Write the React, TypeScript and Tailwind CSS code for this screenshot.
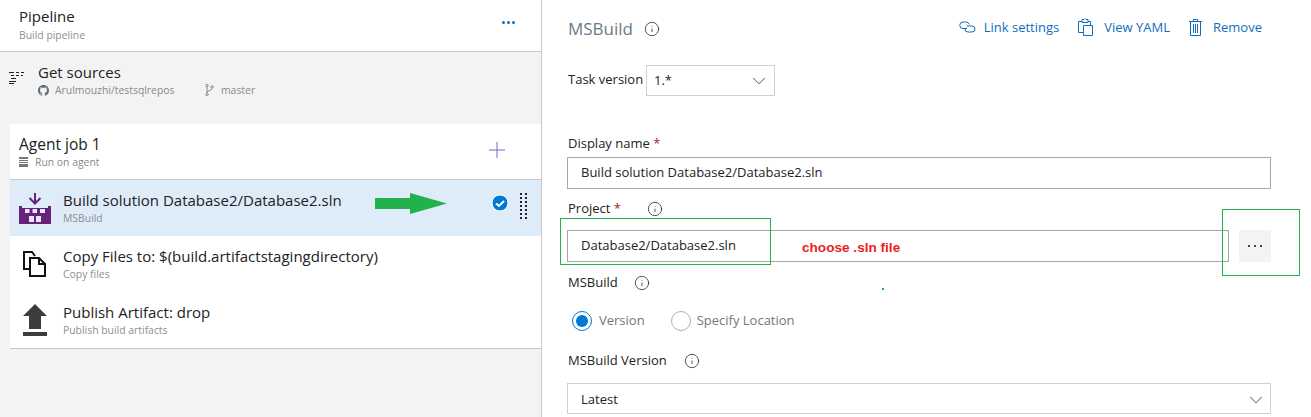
import { ChevronDown, Info } from 'lucide-react';

function BuildIcon() {
    return (
        <svg width="32" height="32" viewBox="0 0 32 32" className="shrink-0">
            <path d="M0 14h3v2h26v-2h3v18H0z M6 17v4h4.500v-4z M13.500 17v4h4.500v-4z M21 17v4h5v-4z M10 24v6h5v-6z M17 24v6h5v-6z" fill="#68217a" fillRule="evenodd" />
            <path d="M16 1v10 M10.500 6l5.500 5.500L21.500 6" fill="none" stroke="#68217a" strokeWidth="2" />
        </svg>
    );
}

function CopyIcon() {
    return (
        <svg width="24" height="26" viewBox="0 0 24 26" className="shrink-0">
            <path d="M8 18H1V1h8l3 4" fill="none" stroke="#111" strokeWidth="2" />
            <path d="M7 7h9l6 6v12H7z M16 7v6h6" fill="#fff" stroke="#111" strokeWidth="2" />
        </svg>
    );
}

function UploadIcon() {
    return (
        <svg width="24" height="32" viewBox="0 0 24 32" className="shrink-0">
            <path d="M12 0l12 12h-6v13H6V12H0z" fill="#3c3c3c" />
            <path d="M0 28h24v4H0z" fill="#3c3c3c" />
        </svg>
    );
}

function SourcesIcon() {
    return (
        <svg width="15" height="12" viewBox="0 0 15 12">
            <path d="M0 .5h5M7 .5h3M12 .5h3M2 3.500h3M7 3.500h3M12 3.500h2M2 6.500h5M0 9.500h7M0 11.500h5" stroke="#222" strokeWidth="1" fill="none" />
        </svg>
    );
}

function GithubIcon() {
    return (
        <svg width="11" height="11" viewBox="0 0 16 16" fill="#5f6b73" className="shrink-0">
            <path d="M8 0C3.580 0 0 3.580 0 8c0 3.540 2.290 6.530 5.470 7.590.4.070.55-.17.55-.38v-1.340c-2.230.48-2.700-1.070-2.700-1.070-.36-.92-.89-1.170-.89-1.170-.73-.5.050-.49.050-.49.800.060 1.230.830 1.230.830.720 1.220 1.870.870 2.330.660.070-.52.280-.870.500-1.070-1.780-.2-3.640-.89-3.640-3.950 0-.870.310-1.590.820-2.150-.080-.2-.360-1.020.080-2.120 0 0 .670-.210 2.200.820a7.600 7.600 0 014 0c1.530-1.040 2.200-.820 2.200-.820.440 1.100.160 1.920.080 2.120.510.560.820 1.270.820 2.150 0 3.070-1.870 3.750-3.650 3.950.290.250.540.730.540 1.480v2.200c0 .210.150.460.550.380A8 8 0 0016 8c0-4.420-3.580-8-8-8z" />
        </svg>
    );
}

function BranchIcon() {
    return (
        <svg width="9" height="12" viewBox="0 0 9 12" fill="none" stroke="#8a8a8a" strokeWidth="1" className="shrink-0">
            <circle cx="2" cy="1.500" r="1.200" />
            <circle cx="2" cy="10.500" r="1.200" />
            <circle cx="7" cy="3" r="1.200" />
            <path d="M2 3v6M7 4.500C7 7 2 6 2 8.500" />
        </svg>
    );
}

function AgentIcon() {
    return (
        <svg width="9" height="10" viewBox="0 0 9 10" className="shrink-0">
            <path d="M0 0h9v2H0zM0 3h9v1H0zM0 5h9v1H0zM0 7h9v3H0z" fill="#777" />
        </svg>
    );
}

function LinkIcon() {
    return (
        <svg width="17" height="12" viewBox="0 0 17 12" fill="none" stroke="#106ebe" strokeWidth="1" className="shrink-0">
            <path d="M8 7.500H4a3.250 3.250 0 0 1 0-6.500h3a3.250 3.250 0 0 1 3.200 2.500" />
            <path d="M8 5h5a3 3 0 0 1 0 6H9a3 3 0 0 1-3-3" />
        </svg>
    );
}

function ClipboardIcon() {
    return (
        <svg width="15" height="18" viewBox="0 0 15 18" fill="none" stroke="#106ebe" strokeWidth="1" className="shrink-0">
            <path d="M4 3.500H.5v11H5 M4 1.500h2l1-1 1 1h2v3H4z M10 3.500h2.500V7" />
            <path d="M5.500 7.500h9v10h-9z" />
        </svg>
    );
}

function TrashIcon() {
    return (
        <svg width="13" height="17" viewBox="0 0 13 17" fill="none" stroke="#106ebe" strokeWidth="1" className="shrink-0">
            <path d="M0 2.500h13 M4.500 2.500v-2h4v2 M1.500 2.500v14h10v-14 M4.500 5v9 M6.500 5v9 M8.500 5v9" />
        </svg>
    );
}

function FieldInfo() {
    return <Info size={16} strokeWidth={1.25} className="text-[#333] shrink-0" />;
}

const steps = [
    { title: 'Build solution Database2/Database2.sln', sub: 'MSBuild', icon: <BuildIcon />, selected: true },
    { title: 'Copy Files to: $(build.artifactstagingdirectory)', sub: 'Copy files', icon: <CopyIcon /> },
    { title: 'Publish Artifact: drop', sub: 'Publish build artifacts', icon: <UploadIcon /> },
];

export default function App() {
    return (
        <div className="relative flex w-[1311px] h-[417px] overflow-hidden bg-white text-[#222] font-['Open_Sans','Noto_Sans',sans-serif]">
            <div className="w-[542px] shrink-0 h-full bg-[#f3f3f3] border-r border-[#c8c8c8] flex flex-col">
                <div className="h-[52px] bg-white border-b border-[#c8c8c8] pl-[19px] pr-[26px] flex items-start justify-between pt-[6px]">
                    <div>
                        <div className="text-[15px] leading-[20px]">Pipeline</div>
                        <div className="text-[10.400px] leading-[14px] mt-[2px] text-[#8f8f8f]">Build pipeline</div>
                    </div>
                    <div className="flex gap-[2px] mt-[15px]">
                        <span className="w-[3px] h-[3px] rounded-full bg-[#106ebe]" />
                        <span className="w-[3px] h-[3px] rounded-full bg-[#106ebe]" />
                        <span className="w-[3px] h-[3px] rounded-full bg-[#106ebe]" />
                    </div>
                </div>

                <div className="h-[72px] flex items-start pl-[9px] pt-[10px]">
                    <div className="mt-[10px] w-[29px]"><SourcesIcon /></div>
                    <div>
                        <div className="text-[15px] leading-[20px]">Get sources</div>
                        <div className="flex items-center mt-[1px] text-[10.400px] leading-[14px] text-[#8a8a8a]">
                            <GithubIcon />
                            <span className="ml-[6px] w-[150px]">Arulmouzhi/testsqlrepos</span>
                            <BranchIcon />
                            <span className="ml-[7px]">master</span>
                        </div>
                    </div>
                </div>

                <div className="ml-[10px] bg-white border-b border-[#c8c8c8]">
                    <div className="h-[56px] border-b border-[#c8c8c8] pl-[9px] pr-[36px] pt-[10px] flex items-start justify-between">
                        <div>
                            <div className="text-[15.500px] leading-[20px]">Agent job 1</div>
                            <div className="flex items-center gap-[7px] mt-[1px] text-[10.400px] leading-[14px] text-[#8a8a8a]">
                                <AgentIcon />
                                Run on agent
                            </div>
                        </div>
                        <svg width="16" height="16" viewBox="0 0 16 16" className="mt-[8px]">
                            <path d="M8 0v16M0 8h16" stroke="#6f6fc4" strokeWidth="1" />
                        </svg>
                    </div>
                    {steps.map((step) => (
                        <div
                            key={step.title}
                            className={`h-[56px] flex items-center pl-[9px] pr-[14px] ${step.selected ? 'bg-[#deecf9]' : ''}`}
                        >
                            <div className="w-[44px] flex justify-center pr-[12px] shrink-0">{step.icon}</div>
                            <div className="flex-1 min-w-0 self-start mt-[10px]">
                                <div className="text-[15px] leading-[20px] whitespace-nowrap">{step.title}</div>
                                <div className="text-[10.400px] leading-[14px] mt-[1px] text-[#8f8f8f]">{step.sub}</div>
                            </div>
                            {step.selected && (
                                <div className="flex items-start gap-[11px] self-stretch">
                                    <svg width="18" height="18" viewBox="0 0 18 18" className="mt-[14px]">
                                        <circle cx="9" cy="9" r="8" fill="#0078d4" stroke="#fff" strokeWidth="1" />
                                        <path d="M5 9.500l3 2.500 5-5" fill="none" stroke="#fff" strokeWidth="2" />
                                    </svg>
                                    <div className="grid grid-cols-2 gap-x-[3px] gap-y-[2px] mt-[13px]">
                                        {Array.from({ length: 14 }).map((_, i) => (
                                            <span key={i} className="w-[2px] h-[2px] bg-[#222]" />
                                        ))}
                                    </div>
                                </div>
                            )}
                        </div>
                    ))}
                </div>
            </div>

            <div className="flex-1 min-w-0 pl-[25px] pr-[40px] text-[13px]">
                <div className="flex items-start justify-between h-[65px] pt-[17px]">
                    <div className="flex items-center gap-[11px] pl-[1px]">
                        <span className="text-[17px] leading-[24px] text-[#6c7a84]">MSBuild</span>
                        <Info size={16} strokeWidth={1.25} className="text-[#333]" />
                    </div>
                    <div className="flex items-center text-[#106ebe] text-[13px] leading-[18px] pr-[9px] mt-[1px]">
                        <LinkIcon />
                        <span className="ml-[8px]">Link settings</span>
                        <span className="ml-[19px]"><ClipboardIcon /></span>
                        <span className="ml-[11px]">View YAML</span>
                        <span className="ml-[19px]"><TrashIcon /></span>
                        <span className="ml-[11px]">Remove</span>
                    </div>
                </div>

                <div className="flex items-center pl-[1px]">
                    <span className="w-[78px] -mt-[2px] whitespace-nowrap">Task version</span>
                    <div className="w-[129px] h-[31px] border border-[#d0d0d0] flex items-center justify-between pl-[7px] pr-[4px]">
                        <span>1.*</span>
                        <ChevronDown size={22} strokeWidth={1} className="text-[#444]" />
                    </div>
                </div>

                <div className="mt-[38px] h-[23px] leading-[18px] pl-[1px] whitespace-nowrap">
                    Display name <span className="text-[#a4262c]">*</span>
                </div>
                <div className="w-[704px] h-[32px] border border-[#a6a6a6] flex items-center pl-[13px]">
                    Build solution Database2/Database2.sln
                </div>

                <div className="h-[41px] flex items-center gap-[26px] pl-[1px] pb-[2px]">
                    <span className="whitespace-nowrap">Project <span className="text-[#a4262c]">*</span></span>
                    <FieldInfo />
                </div>
                <div className="flex w-[704px] gap-[10px]">
                    <div className="flex-1 h-[32px] border border-[#a6a6a6] flex items-center pl-[13px]">
                        Database2/Database2.sln
                    </div>
                    <div className="w-[32px] h-[32px] bg-[#f3f3f3] flex items-center justify-center gap-[4px]">
                        <span className="w-[2px] h-[2px] bg-[#444]" />
                        <span className="w-[2px] h-[2px] bg-[#444]" />
                        <span className="w-[2px] h-[2px] bg-[#444]" />
                    </div>
                </div>

                <div className="h-[41px] flex items-center gap-[16px] pl-[1px]">
                    <span>MSBuild</span>
                    <FieldInfo />
                </div>
                <div className="h-[36px] flex items-center pl-[5px] text-[#767676]">
                    <span className="w-[20px] h-[20px] rounded-full border border-[#0078d4] flex items-center justify-center">
                        <span className="w-[12px] h-[12px] rounded-full bg-[#0078d4]" />
                    </span>
                    <span className="ml-[7px]">Version</span>
                    <span className="ml-[26px] w-[20px] h-[20px] rounded-full border border-[#b0b0b0]" />
                    <span className="ml-[6px]">Specify Location</span>
                </div>
                <div className="h-[44px] flex items-center gap-[17px] pl-[1px]">
                    <span>MSBuild Version</span>
                    <FieldInfo />
                </div>
                <div className="w-[704px] h-[31px] border border-[#d0d0d0] flex items-center justify-between pl-[13px] pr-[3px] pt-[2px]">
                    <span>Latest</span>
                    <ChevronDown size={22} strokeWidth={1} className="text-[#444]" />
                </div>
            </div>

            {/* annotations drawn on top of the screenshot */}
            <svg width="72" height="21" viewBox="0 0 72 21" className="absolute left-[375px] top-[193px]">
                <path d="M0 5h35V0l37 10.500L35 21v-5H0z" fill="#22b14c" />
            </svg>
            <div className="absolute left-[560px] top-[218px] w-[211px] h-[47px] border border-[#22b14c]" />
            <div className="absolute left-[1222px] top-[209px] w-[78px] h-[67px] border border-[#22b14c]" />
            <div className="absolute left-[802px] top-[240px] text-[13.600px] leading-[16px] font-bold text-[#ed1c24] font-['Liberation_Sans',sans-serif]">
                choose .sln file
            </div>
            <div className="absolute left-[882px] top-[288px] w-[2px] h-[2px] bg-[#22b14c]" />
        </div>
    );
}
